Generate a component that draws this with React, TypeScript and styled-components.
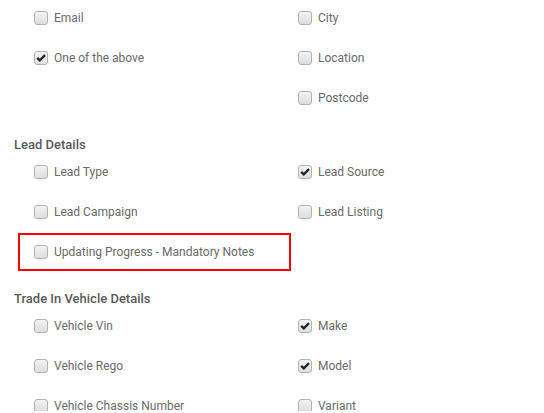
import React, { FC } from 'react'
import styled, { createGlobalStyle } from 'styled-components'

const GlobalStyle = createGlobalStyle`
    html, body {
        margin: 0;
        padding: 0;
        background: #fff;
    }
    body {
        font-family: Roboto, 'Liberation Sans', Arial, sans-serif;
        overflow: hidden;
    }
`

const Page = styled.div`
    width: 544px;
    height: 413px;
    overflow: hidden;
    margin-top: -2px;
`
const Section = styled.section``
const Heading = styled.h3`
    margin: 0;
    padding: 20px 0 0 14px;
    height: 34px;
    box-sizing: border-box;
    font-size: 13px;
    line-height: 14px;
    font-weight: 500;
    color: #5a5a5a;
`
const Grid = styled.div`
    display: grid;
    grid-template-columns: 264px 264px;
    padding-left: 18px;
`
const Item = styled.label<{ highlighted?: boolean }>`
    display: flex;
    align-items: center;
    box-sizing: border-box;
    height: ${p => (p.highlighted ? '38px' : '40px')};
    margin: ${p => (p.highlighted ? '1px 0' : '0')};
    width: ${p => (p.highlighted ? '273px' : 'auto')};
    padding-left: ${p => (p.highlighted ? '14px' : '16px')};
    border: ${p => (p.highlighted ? '2px solid #f00' : 'none')};
    font-size: 12px;
    color: #6a6a6a;
    cursor: pointer;
`
const Box = styled.span`
    width: 12px;
    height: 12px;
    flex: none;
    border: 1px solid #b3b3b3;
    border-radius: 3px;
    background: linear-gradient(#f2f2f2, #dedede);
    margin-right: 6px;
    display: flex;
    align-items: center;
    justify-content: center;
`
const Spacer = styled.div`
    height: 40px;
`

interface Field {
    label: string
    checked?: boolean
    highlighted?: boolean
}

const Check = () => (
    <svg width="10" height="9" viewBox="0 0 10 9">
        <path d="M0.4 4.7 L2.1 3 L3.8 4.8 L8.2 0.3 L9.8 1.9 L3.8 8 Z" fill="#222" />
    </svg>
)

const CheckField: FC<Field> = ({ label, checked, highlighted }) => (
    <Item highlighted={highlighted}>
        <Box>{checked && <Check />}</Box>
        {label}
    </Item>
)

const App: FC = () => (
    <Page>
        <GlobalStyle />
        <Section>
            <Grid>
                <CheckField label="Email" />
                <CheckField label="City" />
                <CheckField label="One of the above" checked />
                <CheckField label="Location" />
                <Spacer />
                <CheckField label="Postcode" />
            </Grid>
        </Section>
        <Section>
            <Heading>Lead Details</Heading>
            <Grid>
                <CheckField label="Lead Type" />
                <CheckField label="Lead Source" checked />
                <CheckField label="Lead Campaign" />
                <CheckField label="Lead Listing" />
                <CheckField label="Updating Progress - Mandatory Notes" highlighted />
            </Grid>
        </Section>
        <Section>
            <Heading>Trade In Vehicle Details</Heading>
            <Grid>
                <CheckField label="Vehicle Vin" />
                <CheckField label="Make" checked />
                <CheckField label="Vehicle Rego" />
                <CheckField label="Model" checked />
                <CheckField label="Vehicle Chassis Number" />
                <CheckField label="Variant" />
            </Grid>
        </Section>
    </Page>
)

export default App
